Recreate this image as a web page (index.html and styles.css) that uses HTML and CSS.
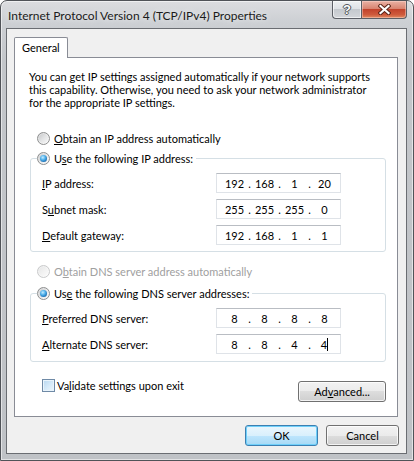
FILE: index.html
```html
<!DOCTYPE html>
<html>
<head>
<meta charset="utf-8">
<title>Internet Protocol Version 4 (TCP/IPv4) Properties</title>
<link rel="stylesheet" href="styles.css">
</head>
<body>
<div class="window">
  <div class="titlebar">
    <div class="title">Internet Protocol Version 4 (TCP/IPv4) Properties</div>
    <div class="caption">
      <div class="cap-btn help"><span class="q">?</span></div>
      <div class="cap-btn close">
        <svg width="13" height="11" viewBox="0 0 13 11">
          <path d="M2.5 2 L10.5 9 M10.5 2 L2.5 9" stroke="#5a2418" stroke-width="4.2" stroke-linecap="square" fill="none"/>
          <path d="M2.5 2 L10.5 9 M10.5 2 L2.5 9" stroke="#ffffff" stroke-width="2.2" stroke-linecap="square" fill="none"/>
        </svg>
      </div>
    </div>
  </div>
  <div class="client">
    <div class="tabstrip"><div class="tab">General</div></div>
    <div class="page">
      <div class="intro">
        <div>You can get IP settings assigned automatically if your network supports</div>
        <div>this capability. Otherwise, you need to ask your network administrator</div>
        <div>for the appropriate IP settings.</div>
      </div>

      <div class="opt first"><span class="radio"></span><span><u>O</u>btain an IP address automatically</span></div>

      <fieldset class="group g1">
        <legend class="opt"><span class="radio on"></span><span>U<u>s</u>e the following IP address:</span></legend>
        <div class="row">
          <span class="lbl"><u>I</u>P address:</span>
          <div class="ip"><span class="oct">192</span><span class="dot">.</span><span class="oct">168</span><span class="dot">.</span><span class="oct">1</span><span class="dot">.</span><span class="oct">20</span></div>
        </div>
        <div class="row">
          <span class="lbl">S<u>u</u>bnet mask:</span>
          <div class="ip"><span class="oct">255</span><span class="dot">.</span><span class="oct">255</span><span class="dot">.</span><span class="oct">255</span><span class="dot">.</span><span class="oct">0</span></div>
        </div>
        <div class="row">
          <span class="lbl"><u>D</u>efault gateway:</span>
          <div class="ip"><span class="oct">192</span><span class="dot">.</span><span class="oct">168</span><span class="dot">.</span><span class="oct">1</span><span class="dot">.</span><span class="oct">1</span></div>
        </div>
      </fieldset>

      <div class="opt dns-auto disabled"><span class="radio"></span><span>O<u>b</u>tain DNS server address automatically</span></div>

      <fieldset class="group g2">
        <legend class="opt"><span class="radio on"></span><span>Us<u>e</u> the following DNS server addresses:</span></legend>
        <div class="row">
          <span class="lbl"><u>P</u>referred DNS server:</span>
          <div class="ip"><span class="oct">8</span><span class="dot">.</span><span class="oct">8</span><span class="dot">.</span><span class="oct">8</span><span class="dot">.</span><span class="oct">8</span></div>
        </div>
        <div class="row">
          <span class="lbl"><u>A</u>lternate DNS server:</span>
          <div class="ip"><span class="oct">8</span><span class="dot">.</span><span class="oct">8</span><span class="dot">.</span><span class="oct">4</span><span class="dot">.</span><span class="oct">4<span class="caret"></span></span></div>
        </div>
      </fieldset>

      <div class="footer">
        <div class="check-opt"><span class="checkbox"></span><span>Va<u>l</u>idate settings upon exit</span></div>
        <div class="btn adv">Ad<u>v</u>anced...</div>
      </div>
    </div>
    <div class="buttons">
      <div class="btn default">OK</div>
      <div class="btn">Cancel</div>
    </div>
  </div>
</div>
</body>
</html>
```

FILE: styles.css
```css
html, body {
  margin: 0;
  padding: 0;
  background: #ffffff;
}

body {
  font-family: "Segoe UI", Lato, "Liberation Sans", sans-serif;
  font-size: 11px;
  color: #000;
}

u {
  text-decoration: underline;
  text-underline-offset: 1px;
}

.window {
  width: 414px;
  height: 461px;
  box-sizing: border-box;
  border: 1px solid #505358;
  border-radius: 7px 7px 0 0;
  background: linear-gradient(#dcdde0 0, #cdd0d4 20px, #c3c6ca 60px, #bfc2c6 100%);
  box-shadow: inset 0 0 0 1px rgba(255, 255, 255, 0.55);
  display: flex;
  flex-direction: column;
  padding: 0 6px 6px 5px;
}

/* title bar */
.titlebar {
  height: 27px;
  display: flex;
  justify-content: space-between;
  align-items: flex-start;
  flex: none;
}

.title {
  margin-top: 7px;
  padding-left: 2px;
  font-size: 12px;
  line-height: 15px;
  color: #1b1b1b;
  white-space: nowrap;
  text-shadow: 0 0 6px rgba(255, 255, 255, 0.9);
}

.caption {
  display: flex;
}

.cap-btn {
  height: 18px;
  box-sizing: border-box;
  border: 1px solid #5c5f66;
  border-top: none;
  display: flex;
  align-items: center;
  justify-content: center;
}

.help {
  width: 29px;
  border-radius: 0 0 0 4px;
  border-right: none;
  background: linear-gradient(#eef0f2 0, #dfe2e6 45%, #c5c9ce 50%, #d3d6da 100%);
  box-shadow: inset 0 0 0 1px rgba(255, 255, 255, 0.6);
}

.help .q {
  font-family: "Liberation Sans", sans-serif;
  font-weight: bold;
  font-size: 13px;
  line-height: 13px;
  color: #ffffff;
  text-shadow: 0 0 1px #3a3d42, 1px 0 0 #5a5d62, -1px 0 0 #5a5d62, 0 1px 0 #5a5d62, 0 -1px 0 #5a5d62;
}

.close {
  width: 46px;
  border-radius: 0 0 4px 0;
  background: linear-gradient(#eab2a5 0, #d88471 45%, #c2432c 50%, #cf5a3c 80%, #e08a60 100%);
  box-shadow: inset 0 0 0 1px rgba(255, 220, 210, 0.45);
}

/* client area */
.client {
  flex: 1;
  display: flex;
  flex-direction: column;
  background: #f0f0f0;
  border: 1px solid #6a6d72;
  padding: 8px 8px 7px 7px;
  min-height: 0;
}

.tabstrip {
  display: flex;
  flex: none;
}

.tab {
  position: relative;
  z-index: 1;
  width: 54px;
  height: 21px;
  box-sizing: border-box;
  border: 1px solid #898c95;
  border-bottom: none;
  background: #ffffff;
  margin-bottom: -1px;
  line-height: 19px;
  padding-left: 7px;
  border-radius: 2px 2px 0 0;
}

.page {
  flex: 1;
  background: #ffffff;
  border: 1px solid #898c95;
  padding: 12px 11px 0 14px;
  display: flex;
  flex-direction: column;
  min-height: 0;
}

.intro {
  line-height: 13px;
  white-space: nowrap;
}

.opt {
  display: flex;
  align-items: center;
  height: 15px;
  gap: 4px;
  white-space: nowrap;
}

.opt.first {
  margin-top: 22px;
  margin-left: 8px;
}

.opt.dns-auto {
  margin-top: 12px;
  margin-left: 8px;
}

.disabled {
  color: #a0a0a0;
}

.radio {
  width: 13px;
  height: 13px;
  box-sizing: border-box;
  border-radius: 50%;
  border: 1px solid #8e8f8f;
  background: linear-gradient(135deg, #c4c5c7 0, #e3e4e5 50%, #fbfbfb 100%);
  box-shadow: inset 0 0 0 1px rgba(255, 255, 255, 0.35);
  display: flex;
  align-items: center;
  justify-content: center;
  flex: none;
}

.radio.on::after {
  content: "";
  width: 7px;
  height: 7px;
  border-radius: 50%;
  background: radial-gradient(circle at 40% 35%, #c6ecff 0, #4fb0ea 40%, #1c6fb4 75%, #0d4a82 100%);
}

.disabled .radio {
  border-color: #c9cacb;
  background: linear-gradient(135deg, #e3e4e5 0, #f1f1f1 50%, #fcfcfc 100%);
}

.group {
  margin: 0 0 0 1px;
  padding: 7px 0 6px 11px;
  border: 1px solid #d5dfe5;
  border-radius: 3px;
  min-width: 0;
}

.g1 {
  margin-top: 5px;
}

.g2 {
  margin-top: 7px;
  padding-bottom: 7px;
}

.group legend {
  margin-left: -5px;
  padding: 0 3px 0 0;
}

.row {
  display: flex;
  align-items: center;
  height: 20px;
}

.row + .row {
  margin-top: 6px;
}

.lbl {
  width: 174px;
  flex: none;
  white-space: nowrap;
}

.ip {
  width: 125px;
  height: 20px;
  box-sizing: border-box;
  border: 1px solid #dfe3e8;
  border-top-color: #b9bdc3;
  background: #ffffff;
  display: flex;
  align-items: center;
  padding-left: 6px;
}

.oct {
  width: 23px;
  display: flex;
  justify-content: center;
  align-items: center;
}

.dot {
  width: 7px;
  text-align: center;
}

.caret {
  display: inline-block;
  width: 1px;
  height: 13px;
  background: #000;
}

.footer {
  display: flex;
  justify-content: space-between;
  align-items: flex-start;
  margin-top: 19px;
}

.check-opt {
  display: flex;
  align-items: center;
  gap: 2px;
  margin-left: 13px;
  margin-top: -3px;
  height: 15px;
  white-space: nowrap;
}

.checkbox {
  width: 13px;
  height: 13px;
  box-sizing: border-box;
  border: 1px solid #6f8aa6;
  background: linear-gradient(135deg, #b7d7f0 0, #d6eaf9 55%, #eef7fd 100%);
  box-shadow: inset 0 0 0 1px #e9f4fc;
  flex: none;
}

.btn {
  box-sizing: border-box;
  height: 21px;
  border: 1px solid #707070;
  border-radius: 3px;
  background: linear-gradient(#f2f2f2 0, #ebebeb 50%, #dddddd 50%, #cfcfcf 100%);
  box-shadow: inset 0 0 0 1px rgba(255, 255, 255, 0.75);
  display: flex;
  align-items: center;
  justify-content: center;
  white-space: nowrap;
}

.btn.adv {
  width: 88px;
}

.buttons {
  flex: none;
  display: flex;
  justify-content: flex-end;
  gap: 8px;
  margin-top: 8px;
  margin-right: -1px;
}

.buttons .btn {
  width: 73px;
}

.btn.default {
  border-color: #3c7fb1;
  background: linear-gradient(#eaf6fd 0, #d9f0fc 50%, #bee6fd 50%, #a7d9f5 100%);
  box-shadow: inset 0 0 0 1px #6fd0fa;
}
```
